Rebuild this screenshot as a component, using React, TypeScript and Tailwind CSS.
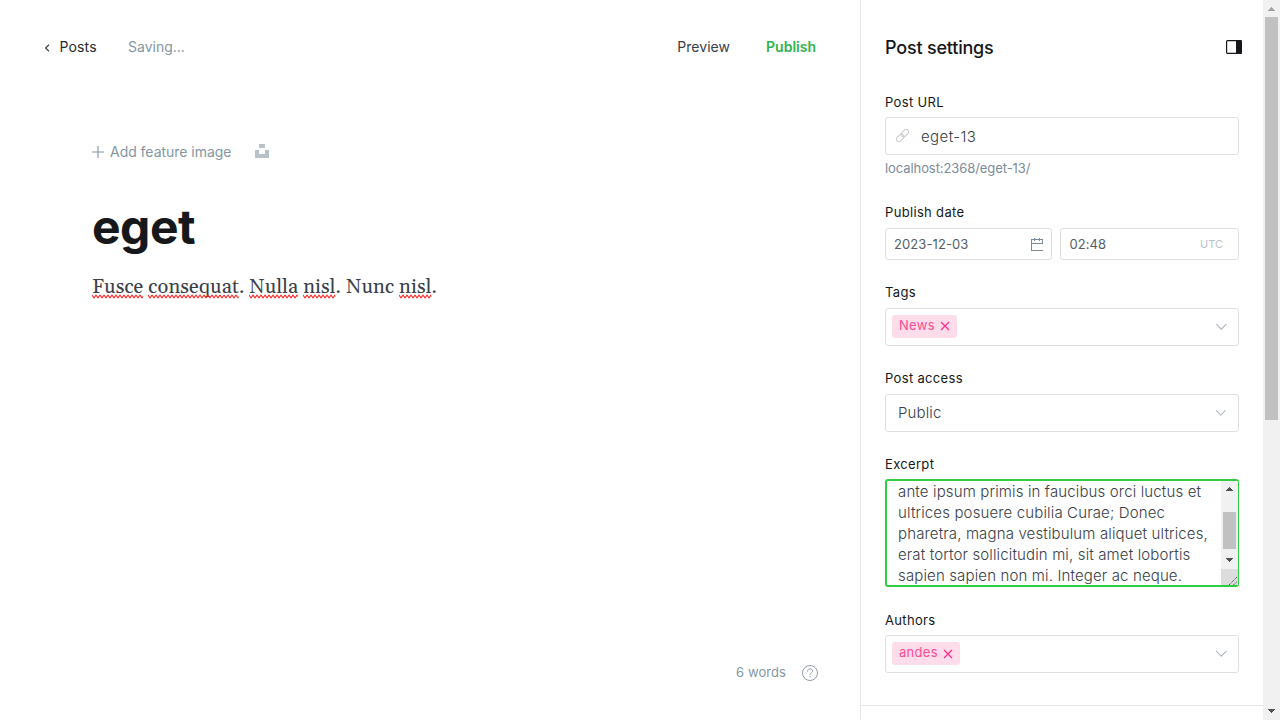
import type { ReactNode } from "react";

function Misspelled({ id, children }: { id: string; children: ReactNode }) {
  return (
    <span className="relative inline-block">
      {children}
      <svg className="absolute left-0 top-[23px] h-[5px] w-full" aria-hidden="true">
        <defs>
          <pattern id={id} width="4" height="5" patternUnits="userSpaceOnUse">
            <path d="M-2 3.8 L0 1.2 L2 3.8 L4 1.2 L6 3.8" fill="none" stroke="#ff2020" strokeWidth="1.1" />
          </pattern>
        </defs>
        <rect width="100%" height="5" fill={`url(#${id})`} />
      </svg>
    </span>
  );
}

function Field({ label, className, children }: { label: string; className: string; children: ReactNode }) {
  return (
    <div className={className}>
      <div className="mb-[5px] h-5 text-[13px] leading-5 tracking-[0.33px] text-[#15171a]">{label}</div>
      {children}
    </div>
  );
}

function Chevron({ className }: { className: string }) {
  return (
    <svg className={className} width="12" height="8" viewBox="0 0 12 8" fill="none" stroke="#abb4be" strokeWidth="1.1">
      <path d="M1.3 1.2 L6.3 6.2 L11.3 1.2" />
    </svg>
  );
}

function Token({ label, iconClass, className }: { label: string; iconClass: string; className: string }) {
  return (
    <span className={`flex h-[23px] items-center justify-between rounded-[3px] bg-[#ffdcea] pl-[7px] pr-[7px] text-[13px] leading-5 text-[#fb4d93] ${className}`}>
      <span className="-mt-[3px] tracking-[0.3px]">{label}</span>
      <svg className={iconClass} width="10" height="10" viewBox="0 0 10 10" fill="none" stroke="#fb2d8d" strokeWidth="1.2">
        <path d="M1 1 L9 9 M9 1 L1 9" />
      </svg>
    </span>
  );
}

function Arrow({ up, color }: { up?: boolean; color: string }) {
  return (
    <svg className="-ml-px" width="8" height="4" viewBox="0 0 8 4" shapeRendering="crispEdges" fill={color}>
      <path d={up ? "M0 4 L4 0 L8 4 Z" : "M0 0 L4 4 L8 0 Z"} />
    </svg>
  );
}

const box = "flex items-center rounded-[3px] border border-[#dddfe1]";

export default function App() {
  return (
    <div className="flex h-[720px] w-[1280px] overflow-hidden bg-white font-['Inter','Liberation_Sans',sans-serif] text-[#394047]">
      <main className="flex w-[860px] flex-col">
        <header className="flex h-[94px] items-center pl-[44px] pr-[44px] text-[14px] leading-5">
          <svg className="mt-[2px]" width="6" height="8" viewBox="0 0 6 8" fill="none" stroke="#394047" strokeWidth="1.2">
            <path d="M5 .7 L1.6 4 L5 7.3" />
          </svg>
          <span className="ml-[9.5px] w-[68.5px] tracking-[0.15px] text-[#262a2f]">Posts</span>
          <span className="flex-1 text-[#8496a3]">Saving...</span>
          <span className="mr-[36px] tracking-[0.05px]">Preview</span>
          <span className="font-semibold text-[#30b24a]">Publish</span>
        </header>
        <section className="flex-1 pl-[92px]">
          <div className="mt-[48px] flex h-5 items-center text-[14px] leading-5 text-[#8496a3]">
            <svg width="12" height="12" viewBox="0 0 12 12" stroke="#8496a3" strokeWidth="1.1">
              <path d="M6 0 V12 M0 6 H12" />
            </svg>
            <span className="ml-[6px] w-[145px] tracking-[-0.03px]">Add feature image</span>
            <svg className="-mt-[3px]" width="14" height="14" viewBox="0 0 14 14" fill="#b9c1c8">
              <path d="M4 0 H10 V4 H4 Z M0 6 H4 V10 H10 V6 H14 V14 H0 Z" />
            </svg>
          </div>
          <h1 className="mt-[36px] h-[58px] text-[48px] font-bold leading-[58px] tracking-[-0.5px] text-[#15171a]">eget</h1>
          <p className="mt-[15px] h-8 whitespace-nowrap font-['Georgia','Gelasio','Liberation_Serif',serif] text-[20px] leading-8 tracking-[0.1px] text-[#394047]">
            <Misspelled id="w1">Fusce</Misspelled> <Misspelled id="w2">consequat</Misspelled>.{" "}
            <Misspelled id="w3">Nulla</Misspelled> <Misspelled id="w4">nisl</Misspelled>. Nunc{" "}
            <Misspelled id="w5">nisl</Misspelled>.
          </p>
        </section>
        <footer className="mb-[37px] flex h-5 items-center justify-end pr-[42px] text-[13px] leading-5 text-[#8496a3]">
          <span className="-mt-[2px] mr-[16px] tracking-[0.08px]">6 words</span>
          <svg width="16" height="16" viewBox="0 0 16 16" fill="none" stroke="#8e9cac">
            <circle cx="8" cy="8" r="7.5" />
            <path d="M5.5 6.5 C5.3 3 10.7 3.1 10.5 6.2 C10.4 7.9 8 7.8 8 9.8 M8 11 V12.2" />
          </svg>
        </footer>
      </main>
      <aside className="w-[403px] border-l border-[#e3e6e9]">
        <div className="h-[706px] border-b border-[#e3e6e9] pl-[24px] pr-[24px]">
          <div className="flex h-[92px] items-center justify-between pt-[2px]">
            <h2 className="pt-[2px] text-[18px] font-medium leading-6 tracking-[-0.2px] text-[#15171a]">Post settings</h2>
            <svg className="-mr-[3px]" width="16" height="14" viewBox="0 0 16 14">
              <rect x=".6" y=".6" width="14.8" height="12.8" rx="1" fill="white" stroke="#15171a" strokeWidth="1.2" />
              <path d="M10 0 H15.5 V14 H10 Z" fill="#15171a" />
            </svg>
          </div>
          <Field label="Post URL" className="h-[110px]">
            <div className={`${box} h-[38px] pl-[10px] text-[15px] font-light`}>
              <svg className="-mt-px" width="13" height="13" viewBox="0 0 24 24" fill="none" stroke="#c8cacc" strokeWidth="1.8">
                <g transform="rotate(-45 12 12)">
                  <rect x="-2" y="7.5" width="15.5" height="9" rx="4.5" />
                  <rect x="10.5" y="7.5" width="15.5" height="9" rx="4.5" />
                </g>
              </svg>
              <span className="ml-[12px] pt-[2px] tracking-[0.4px]">eget-13</span>
            </div>
            <div className="mt-[3px] text-[13px] leading-5 tracking-[-0.08px] text-[#7c8b9a]">localhost:2368/eget-13/</div>
          </Field>
          <Field label="Publish date" className="h-[80px]">
            <div className="flex gap-[8px] pt-px text-[13px] text-[#54606b]">
              <div className={`${box} h-[32px] w-[167px] justify-between pl-[8px] pr-[8px]`}>
                <span className="pt-px tracking-[0.1px]">2023-12-03</span>
                <svg width="12" height="13" viewBox="0 0 12 13" fill="none" stroke="#7c8b9a">
                  <path d="M0 1.5 H12 M.5 1 V13 M11.5 1 V5 M0 12.5 H12 M0 5.5 H12 M3.5 0 V3 M8.5 0 V3" />
                </svg>
              </div>
              <div className={`${box} h-[32px] w-[179px] justify-between pl-[8.5px] pr-[15px]`}>
                <span className="pt-px tracking-[0.05px]">02:48</span>
                <span className="text-[11px] text-[#b9c1c9]">UTC</span>
              </div>
            </div>
          </Field>
          <Field label="Tags" className="h-[86px]">
            <div className="pt-px">
              <div className={`${box} h-[38px] justify-between pl-[6px] pr-[11px]`}>
                <Token label="News" iconClass="-mt-px" className="-mt-px w-[65px]" />
                <Chevron className="" />
              </div>
            </div>
          </Field>
          <Field label="Post access" className="h-[86px]">
            <div className="pt-px">
              <div className={`${box} h-[38px] justify-between pl-[12px] pr-[12px] text-[15px] font-light`}>
                <span className="tracking-[0.12px]">Public</span>
                <Chevron className="w-[11px]" />
              </div>
            </div>
          </Field>
          <Field label="Excerpt" className="h-[156px]">
            <div className="flex h-[108px] justify-between overflow-hidden rounded-[3px] border-2 border-r border-[#30cf43] pl-[11px]">
              <div className="whitespace-pre text-[15px] font-light leading-[21px] tracking-[0.14px]">
                {"ante ipsum primis in faucibus orci luctus et\nultrices posuere cubilia Curae; Donec\npharetra, magna vestibulum aliquet ultrices,\nerat tortor sollicitudin mi, sit amet lobortis\nsapien sapien non mi. Integer ac neque."}
              </div>
              <div className="flex w-[17px] shrink-0 flex-col items-center bg-[#f1f1f1]">
                <div className="flex h-[31px] items-start pt-[6px]"><Arrow up color="#505050" /></div>
                <div className="ml-[-1px] h-[37px] w-[13px] shrink-0 bg-[#c1c1c1]" />
                <div className="h-[20px] shrink-0 pt-[9px] leading-[0]"><Arrow color="#505050" /></div>
                <svg className="flex-1 bg-[#dcdcdc]" width="17" height="16" viewBox="0 0 17 16" stroke="#505050">
                  <path d="M8 16 L16 8 M12.5 16 L16 12.5" strokeDasharray="1.4 .6" />
                </svg>
              </div>
            </div>
          </Field>
          <Field label="Authors" className="">
            <div className={`${box} h-[38px] justify-between pl-[6px] pr-[11px]`}>
              <Token label="andes" iconClass="" className="-mt-px w-[68px]" />
              <Chevron className="" />
            </div>
          </Field>
        </div>
      </aside>
      <div className="flex w-[17px] flex-col items-center justify-between bg-[#f1f1f1]">
        <div className="flex flex-col items-center pt-[7px]">
          <Arrow up color="#a3a3a3" />
          <div className="mt-[6px] h-[403px] w-[13px] bg-[#c1c1c1]" />
        </div>
        <div className="pb-[7px] leading-[0]"><Arrow color="#505050" /></div>
      </div>
    </div>
  );
}
